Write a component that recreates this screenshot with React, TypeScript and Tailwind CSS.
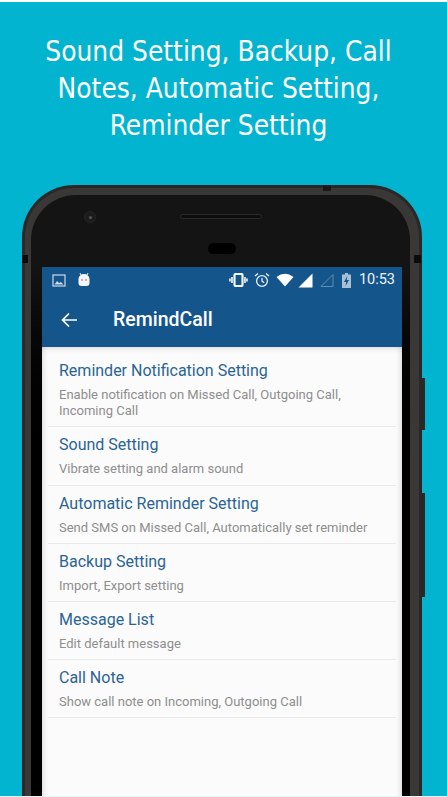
const rows = [
  { t: "Reminder Notification Setting", s: "Enable notification on Missed Call, Outgoing Call, Incoming Call", h: "h-[74px]" },
  { t: "Sound Setting", s: "Vibrate setting and alarm sound", h: "h-[59px]" },
  { t: "Automatic Reminder Setting", s: "Send SMS on Missed Call, Automatically set reminder", h: "h-[58px]" },
  { t: "Backup Setting", s: "Import, Export setting", h: "h-[58px]" },
  { t: "Message List", s: "Edit default message", h: "h-[58px]" },
  { t: "Call Note", s: "Show call note on Incoming, Outgoing Call", h: "h-[58px]" },
];

export default function App() {
  return (
    <div className="relative w-[447px] h-[797px] overflow-hidden bg-[#02b4d0] flex flex-col font-['Roboto',sans-serif]">
      <div className="absolute inset-x-0 top-0 h-[2px] bg-white z-10" />
      <div className="absolute inset-x-0 bottom-0 h-[1px] bg-[#e8f3f5] z-10" />
      <h1 className="h-[185px] shrink-0 pt-[33px] pl-[22px] pr-[32px] text-center text-white text-[27.8px] leading-[37px] font-normal font-['DejaVu_Sans_Condensed','DejaVu_Sans',sans-serif]">
        Sound Setting, Backup, Call Notes, Automatic Setting, Reminder Setting
      </h1>
      <div className="relative ml-[22px] w-[400px] flex-1 bg-[#3a3837] rounded-t-[52px] border-x-[3px] border-t-[3px] border-[#2a2826] pl-[6px] pr-[9px] pt-[7px] flex flex-col">
        <div className="absolute right-[-6px] top-[190px] w-[3px] h-[52px] bg-[#2a2626]" />
        <div className="absolute right-[-6px] top-[305px] w-[3px] h-[104px] bg-[#2a2626]" />
        <div className="absolute right-[88px] top-[-3px] w-[8px] h-[6px] bg-[#1a1818]" />
        <div className="absolute left-[-3px] top-[67px] w-[6px] h-[8px] bg-[#0c0c0c]" />
        <div className="absolute right-[-2px] top-[67px] w-[7px] h-[8px] bg-[#0c0c0c]" />
        <div className="flex-1 flex flex-col rounded-t-[45px] bg-[#141414] overflow-hidden">
          <div className="h-[72px] shrink-0 relative">
            <div className="absolute left-[53px] top-[16px] w-[12px] h-[12px] rounded-full bg-[#1c1c1c] border border-[#262626] flex items-center justify-center">
              <div className="w-[3px] h-[3px] rounded-full bg-[#555]" />
            </div>
            <div className="absolute left-[149px] top-[19px] w-[82px] h-[5px] rounded-full bg-[#0e0e0e] border border-[#2a2a2a]" />
            <div className="absolute left-[177px] top-[48px] w-[28px] h-[11px] rounded-full bg-black" />
          </div>
          <div className="flex-1 flex bg-linear-to-b from-[#141414] to-black to-40% pl-[11px] pr-[8px]">
            <div className="w-[360px] flex flex-col bg-[#fbfbfb]">
              <div className="h-[80px] shrink-0 bg-[#14558c] text-white flex flex-col">
                <div className="h-[26px] px-[10px] pr-[7px] flex items-center">
                  <svg width="14" height="13" viewBox="0 0 14 13" className="opacity-90">
                    <rect x="1" y="1" width="12" height="11" fill="none" stroke="#dfeaf3" strokeWidth="1.2" />
                    <path d="M2.5 10.5 L5 7 L7 9 L9 8 L11.5 10.5 Z" fill="#dfeaf3" />
                  </svg>
                  <svg width="14" height="14" viewBox="0 0 14 14" className="ml-[11px]">
                    <path d="M1.5 6 a5.5 5 0 0 1 11 0 V10 a3 3 0 0 1 -3 3 H4.5 a3 3 0 0 1 -3 -3 Z" fill="#f4f7fa" />
                    <path d="M4 2 L3 0 M10 2 L11 0" stroke="#f4f7fa" strokeWidth="1" />
                    <circle cx="5" cy="7" r="1" fill="#e08a8a" />
                    <circle cx="9" cy="7" r="1" fill="#e08a8a" />
                  </svg>
                  <div className="ml-auto flex items-center">
                    <svg width="19" height="14" viewBox="0 0 19 14">
                      <rect x="5.5" y="1" width="8" height="12" rx="1.2" fill="none" stroke="#f1f5f9" strokeWidth="2.2" />
                      <path d="M3 4 V10 M1 5.5 V8.5 M16 4 V10 M18 5.5 V8.5" stroke="#f1f5f9" strokeWidth="1.6" />
                    </svg>
                    <svg width="16" height="16" viewBox="0 0 16 16" className="ml-[6px]" fill="none" stroke="#e9f0f6" strokeWidth="1.3">
                      <circle cx="8" cy="9" r="5.4" />
                      <path d="M8 6 V9.2 L10.2 10.6" />
                      <path d="M1 4 L4 1.4 M15 4 L12 1.4" />
                    </svg>
                    <svg width="18" height="14" viewBox="0 0 18 14" className="ml-[6px]">
                      <path d="M0.5 4 Q9 -2.5 17.5 4 L9 13.5 Z" fill="#fff" />
                    </svg>
                    <svg width="15" height="15" viewBox="0 0 15 15" className="ml-[4px]">
                      <path d="M0.5 14.5 L14.5 0.5 V14.5 Z" fill="#fff" />
                    </svg>
                    <svg width="14" height="14" viewBox="0 0 14 14" className="ml-[7px]">
                      <path d="M1 13.5 L13 1.5 V13.5 Z" fill="none" stroke="#5f8cb1" strokeWidth="1" />
                    </svg>
                    <svg width="9" height="15" viewBox="0 0 9 15" className="ml-[8px]">
                      <rect x="0" y="1.5" width="9" height="13.5" fill="#a9c0d4" />
                      <rect x="3" y="0" width="3" height="2" fill="#a9c0d4" />
                      <path d="M5.3 3 L2 9 H4.2 L3.6 13 L7 7 H4.8 Z" fill="#14558c" />
                    </svg>
                    <span className="ml-[8px] text-[14.5px] leading-none text-[#eef4f8]">10:53</span>
                  </div>
                </div>
                <div className="flex-1 flex items-center pl-[19px]">
                  <svg width="16" height="16" viewBox="0 0 16 16" fill="none" stroke="#fff" strokeWidth="1.7">
                    <path d="M16 8 H1.5 M8 1.5 L1.5 8 L8 14.5" />
                  </svg>
                  <span className="ml-[36px] text-[19.5px] font-medium leading-none">RemindCall</span>
                </div>
              </div>
              <div className="flex-1 flex flex-col pt-[6px] shadow-[inset_6px_0_6px_-6px_rgba(0,0,0,0.2),inset_-6px_0_6px_-6px_rgba(0,0,0,0.2),inset_0_6px_6px_-6px_rgba(0,0,0,0.2)]">
                {rows.map((r) => (
                  <div key={r.t} className={`${r.h} mx-[6px] pl-[11px] pr-[17px] pt-[8px] border-b-[1.5px] border-[#e9e9e9] shrink-0`}>
                    <div className="text-[16px] leading-[20px] text-[#2a6494]">{r.t}</div>
                    <div className="mt-[6px] text-[13px] leading-[16px] text-[#8e8e8e]">{r.s}</div>
                  </div>
                ))}
              </div>
            </div>
          </div>
        </div>
      </div>
    </div>
  );
}
